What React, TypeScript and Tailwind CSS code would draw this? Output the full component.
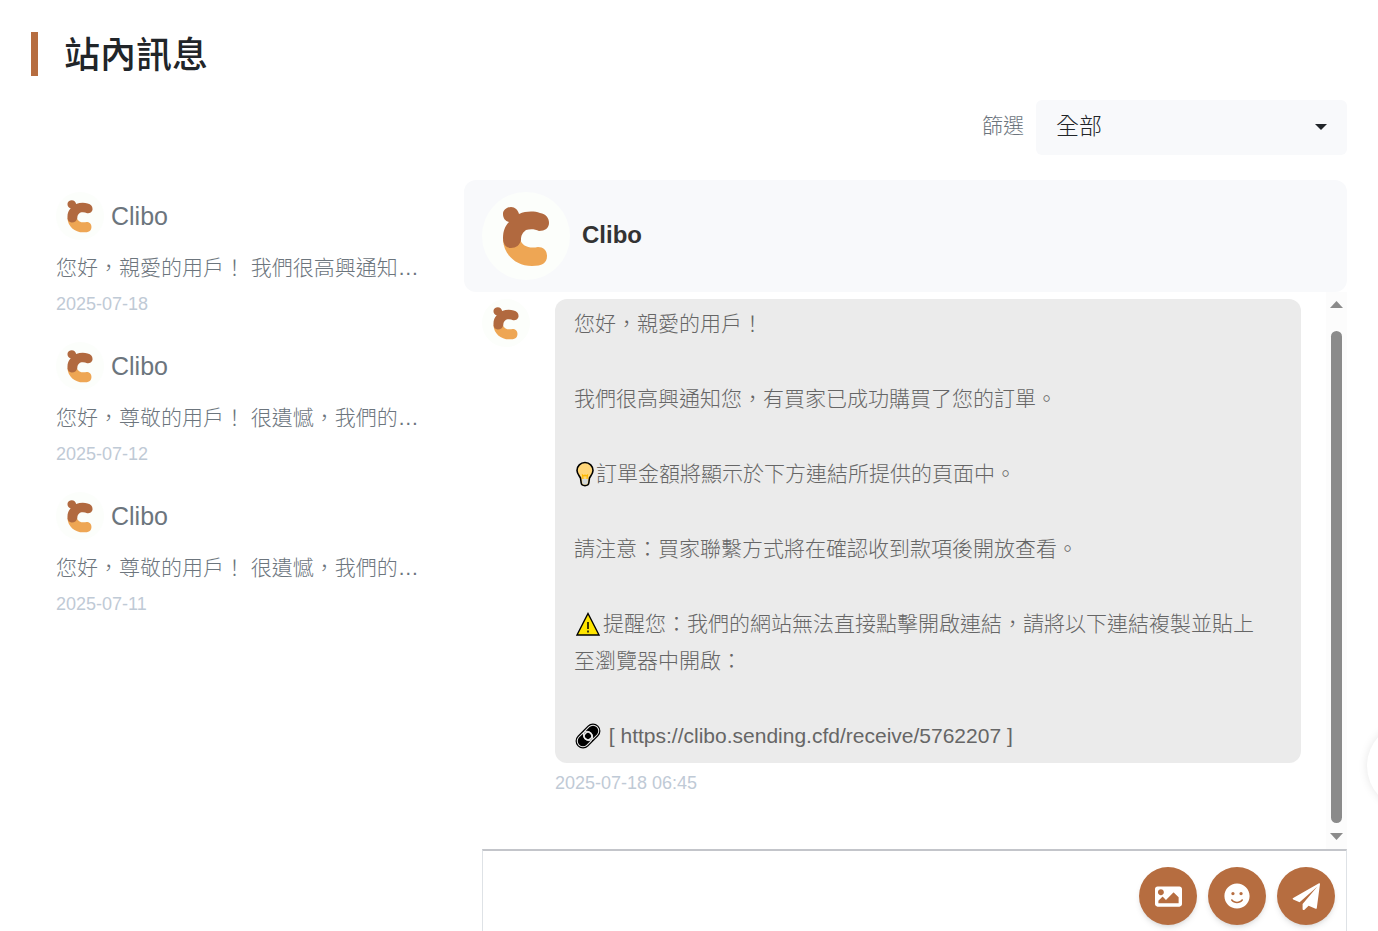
import { useState } from "react";
import { FaImage, FaSmile } from "react-icons/fa";

const conversations = [
  { id: 1, name: "Clibo", preview: "您好，親愛的用戶！ 我們很高興通知…", date: "2025-07-18" },
  { id: 2, name: "Clibo", preview: "您好，尊敬的用戶！ 很遺憾，我們的…", date: "2025-07-12" },
  { id: 3, name: "Clibo", preview: "您好，尊敬的用戶！ 很遺憾，我們的…", date: "2025-07-11" },
];

function PlaneIcon() {
  return (
    <svg viewBox="0 0 28 27" className="h-[27px] w-7" fill="currentColor" aria-hidden="true">
      <path d="M27 0.300C27.600 0 28.100 0.400 28 1L24.800 25C24.700 25.800 24.200 26 23.600 25.700L16.600 22.800L12.500 26.700C11.700 27.300 10.600 26.900 10.600 25.900V20.900L25.200 3.800L7.600 19.200L1.200 16.400C0.500 16 0.500 15.400 1.200 15Z" />
    </svg>
  );
}

const actions = [
  { label: "上傳圖片", icon: <FaImage size={27} /> },
  { label: "表情符號", icon: <FaSmile size={26} /> },
  { label: "傳送訊息", icon: <PlaneIcon /> },
];

function Avatar({ className }: { className: string }) {
  return (
    <svg viewBox="0 0 88 88" className={`shrink-0 ${className}`} role="img" aria-label="Clibo">
      <circle cx="44" cy="44" r="44" fill="#fcfefb" />
      <path
        d="M21 48C22 63 34 74 50 74C60 74 65 71 65 64C65 58 61 55 56 55C47 57 40 54 38 47Z"
        fill="#eea654"
      />
      <path
        d="M29 15C33 15 36 18 37 22C44 19 52 19 58 21C64 22 67 26 67 31C67 36 63 39 57 39C53 37 48 37 44 38C40 41 39 44 39 48C38 53 34 56 29 56C24 56 21 52 21 46C21 39 23 34 27 30C23 29 21 26 21 22C21 18 25 15 29 15Z"
        fill="#b1693f"
      />
    </svg>
  );
}

function BulbIcon() {
  return (
    <svg viewBox="0 0 22 26" className="inline-block h-[26px] w-[22px] align-[-6px]" role="img" aria-label="燈泡">
      <path
        d="M11 1.500C6.500 1.500 3 5 3 9.500C3 12.500 5 14.500 6.500 17L7.200 22C7.500 24 9 24.600 11 24.600C13 24.600 14.500 24 14.800 22L15.500 17C17 14.500 19 12.500 19 9.500C19 5 15.500 1.500 11 1.500Z"
        fill="#ffd679"
        stroke="#000"
        strokeWidth="1.600"
      />
      <path d="M8 18H14L13.500 22.500C13 23.800 9 23.800 8.500 22.500Z" fill="#d2d8dc" />
      <path d="M9 18L8.500 14L10 15L11 14L12 15L13.500 14L13 18" fill="none" stroke="#fbb900" strokeWidth="1.200" />
    </svg>
  );
}

function WarningIcon() {
  return (
    <svg viewBox="0 0 28 26" className="inline-block h-[26px] w-7 mr-px align-[-6px]" role="img" aria-label="警告">
      <path d="M14 2.500L25 24H3Z" fill="#ffe500" stroke="#000" strokeWidth="1.400" />
      <path d="M14 11V18M14 19.500V21.500" stroke="#000" strokeWidth="1.500" />
    </svg>
  );
}

function LinkIcon() {
  return (
    <svg viewBox="0 0 28 26" className="inline-block h-[26px] w-7 mr-px align-[-6px]" role="img" aria-label="連結">
      <g transform="rotate(-45 14 13)" fill="none">
        <rect x="-0.500" y="5.500" width="29" height="15" rx="7.500" fill="#000" />
        <rect x="1.200" y="7.300" width="17" height="11.400" rx="5.700" stroke="#ebebeb" />
        <rect x="9.800" y="7.300" width="17" height="11.400" rx="5.700" stroke="#ebebeb" />
        <circle cx="14" cy="13" r="3.800" fill="#000" stroke="#ebebeb" strokeWidth="1.600" />
      </g>
    </svg>
  );
}

function ScrollTrack() {
  return (
    <div className="flex w-[21px] shrink-0 flex-col items-center bg-[#fcfcfc] py-[9px]" aria-hidden="true">
      <svg viewBox="0 0 13 7" className="h-[7px] w-[13px]">
        <path d="M6.500 0L13 7H0Z" fill="#8b8b8b" />
      </svg>
      <div className="mt-[23px] mb-[10px] w-[11px] flex-1 rounded-full bg-[#8b8b8b]" />
      <svg viewBox="0 0 13 7" className="h-[7px] w-[13px]">
        <path d="M6.500 7L13 0H0Z" fill="#8b8b8b" />
      </svg>
    </div>
  );
}

export default function App() {
  const [filter, setFilter] = useState("all");
  const [draft, setDraft] = useState("");

  return (
    <main className="relative flex h-screen flex-col overflow-hidden bg-white px-[31px] pt-8 font-['Liberation_Sans','Noto_Sans_CJK_TC',sans-serif] text-[#212529]">
      <h1 className="flex h-11 shrink-0 items-center border-l-[7px] border-[#b66d40] pt-1 pl-[26px] text-4xl font-medium">
        站內訊息
      </h1>

      {/* Filter */}
      <div className="mt-6 flex shrink-0 items-center justify-end gap-3">
        <label htmlFor="filter" className="pb-[3px] text-[21px] font-light text-[#6c757d]">
          篩選
        </label>
        <div className="relative w-[311px]">
          <select
            id="filter"
            value={filter}
            onChange={(e) => setFilter(e.target.value)}
            className="h-[55px] w-full appearance-none rounded-md bg-[#f8f9fb] px-5 pb-[2px] text-[23px] font-light"
          >
            <option value="all">全部</option>
            <option value="unread">未讀</option>
          </select>
          <svg viewBox="0 0 12 6" className="pointer-events-none absolute top-6 right-5 h-[6px] w-3">
            <path d="M0 0H12L6 6Z" fill="#212529" />
          </svg>
        </div>
      </div>

      <div className="mt-[25px] flex min-h-0 flex-1">
        {/* Conversation list */}
        <ul className="w-[433px] shrink-0 px-[25px] pt-3">
          {conversations.map((item) => (
            <li key={item.id} className="h-[150px]">
              <button type="button" className="block w-full text-left">
                <span className="flex items-center gap-[7px]">
                  <Avatar className="h-12 w-12" />
                  <span className="text-[25px] leading-[48px] text-[#6c757d]">{item.name}</span>
                </span>
                <span className="mt-2 block text-[21px] leading-10 font-light whitespace-nowrap text-[#6c757d]">
                  {item.preview}
                </span>
                <span className="block text-lg leading-8 text-[#bfcad6]">{item.date}</span>
              </button>
            </li>
          ))}
        </ul>

        {/* Chat */}
        <section className="flex min-w-0 flex-1 flex-col">
          <header className="flex h-28 shrink-0 items-center gap-3 rounded-xl bg-[#f8f9fb] px-[18px]">
            <Avatar className="h-[88px] w-[88px]" />
            <h2 className="pb-[2px] text-2xl font-bold text-[#333]">Clibo</h2>
          </header>

          <div className="flex h-[557px] shrink-0 pl-[18px]">
            <div className="flex min-w-0 flex-1 items-start pt-[7px] pr-[25px]">
              <Avatar className="h-12 w-12" />
              <div className="ml-[25px] min-w-0 flex-1">
                <div className="space-y-[38px] rounded-xl bg-[#ebebeb] pt-[6px] pr-8 pb-[9px] pl-[19px] text-[21px] leading-[37px] font-light text-[#666]">
                  <p>您好，親愛的用戶！</p>
                  <p>我們很高興通知您，有買家已成功購買了您的訂單。</p>
                  <p>
                    <BulbIcon />
                    訂單金額將顯示於下方連結所提供的頁面中。
                  </p>
                  <p>請注意：買家聯繫方式將在確認收到款項後開放查看。</p>
                  <p>
                    <WarningIcon />
                    提醒您：我們的網站無法直接點擊開啟連結，請將以下連結複製並貼上至瀏覽器中開啟：
                  </p>
                  <p>
                    <LinkIcon /> [ https://clibo.sending.cfd/receive/5762207 ]
                  </p>
                </div>
                <time className="mt-1 block text-lg leading-8 text-[#bfcad6]">2025-07-18 06:45</time>
              </div>
            </div>
            <ScrollTrack />
          </div>

          {/* Composer */}
          <form
            onSubmit={(e) => e.preventDefault()}
            className="ml-[18px] flex min-h-0 flex-1 items-start overflow-hidden border-x border-t-2 border-[#dee2e6] border-t-[#c3c5ca] pt-4 pr-[11px]"
          >
            <textarea
              aria-label="輸入訊息"
              value={draft}
              onChange={(e) => setDraft(e.target.value)}
              className="mr-[6px] h-[75px] min-w-0 flex-1 resize-y px-4 text-[21px] outline-none"
            />
            <div className="flex gap-[11px]">
              {actions.map(({ label, icon }) => (
                <button
                  key={label}
                  type="button"
                  aria-label={label}
                  className="flex h-[58px] w-[58px] items-center justify-center rounded-full bg-[#b66d40] text-white shadow-md"
                >
                  {icon}
                </button>
              ))}
            </div>
          </form>
        </section>
      </div>

      {/* Floating button, half off the edge */}
      <button
        type="button"
        aria-label="開啟選單"
        className="absolute -right-[75px] bottom-[122px] h-[86px] w-[86px] rounded-full bg-white shadow-[0_0_10px_rgba(0,0,0,0.1)]"
      />
    </main>
  );
}
